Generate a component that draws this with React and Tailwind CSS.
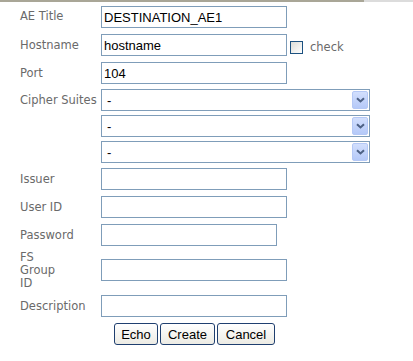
import React from "react";

const labelCls =
  "w-[81px] shrink-0 text-[11.5px] text-[#6a6a6a] whitespace-nowrap [font-family:'DejaVu_Sans',Verdana,sans-serif]";
const inputCls =
  "h-[22px] border border-[#7f9db9] bg-white px-[2px] text-[13px] text-black outline-none [font-family:'Liberation_Sans',Arial,sans-serif]";

function Field({ label, value = "", width = "w-[186px]", className = "mt-[6px]" }) {
  return (
    <div className={`flex items-center ${className}`}>
      <div className={labelCls}>{label}</div>
      <input readOnly defaultValue={value} className={`${inputCls} ${width}`} />
    </div>
  );
}

function Select({ className = "mt-[4px]", label = "" }) {
  return (
    <div className={`flex items-center ${className}`}>
      <div className={labelCls}>{label}</div>
      <div className="relative flex h-[22px] w-[269px] items-center border border-[#7f9db9] bg-white pl-[5px] text-[13px] text-black [font-family:'Liberation_Sans',Arial,sans-serif]">
        -
        <div className="absolute right-[1px] top-[1px] flex h-[18px] w-[16px] items-center justify-center rounded-[2px] border border-[#b4c8f6] bg-gradient-to-b from-[#d2dffd] to-[#b5c9f8]">
          <svg width="9" height="6" viewBox="0 0 9 6">
            <path d="M1 1.2 L4.5 4.5 L8 1.2" fill="none" stroke="#4d6185" strokeWidth="2" />
          </svg>
        </div>
      </div>
    </div>
  );
}

function Btn({ children, w }) {
  return (
    <button
      className={`h-[22px] ${w} rounded-[3px] border border-[#1f3f6f] bg-gradient-to-b from-white to-[#ecebe4] text-[13px] text-black [font-family:'Liberation_Sans',Arial,sans-serif]`}
    >
      {children}
    </button>
  );
}

export default function App() {
  return (
    <div className="h-[361px] w-[413px] bg-white">
      <div className="flex h-[2px]">
        <div className="w-[364px] bg-[#a9a697]" />
        <div className="flex-1 bg-[#dcdcdc]" />
      </div>
      <div className="flex flex-col pl-[20px] pt-[4px]">
        <Field label="AE Title" value="DESTINATION_AE1" className="" />
        <div className="mt-[6px] flex items-center">
          <div className={labelCls}>Hostname</div>
          <input readOnly defaultValue="hostname" className={`${inputCls} w-[186px]`} />
          <div className="ml-[3px] mt-[4px] h-[13px] w-[13px] border border-[#1c5180] bg-gradient-to-br from-[#dcdcd7] to-white" />
          <span className="ml-[7px] mt-[5px] text-[11.5px] text-[#6a6a6a] [font-family:'DejaVu_Sans',Verdana,sans-serif]">
            check
          </span>
        </div>
        <Field label="Port" value="104" />
        <Select label="Cipher Suites" className="mt-[5px]" />
        <Select />
        <Select />
        <Field label="Issuer" className="mt-[5px]" />
        <Field label="User ID" />
        <Field label="Password" width="w-[176px]" />
        <div className="mt-[5px] flex h-[38px] items-center">
          <div className={`${labelCls} leading-[13px]`}>
            FS
            <br />
            Group
            <br />
            ID
          </div>
          <input readOnly className={`${inputCls} w-[186px]`} />
        </div>
        <Field label="Description" />
        <div className="ml-[94px] mt-[6px] flex gap-[2px]">
          <Btn w="w-[44px]">Echo</Btn>
          <Btn w="w-[55px]">Create</Btn>
          <Btn w="w-[58px]">Cancel</Btn>
        </div>
      </div>
    </div>
  );
}
